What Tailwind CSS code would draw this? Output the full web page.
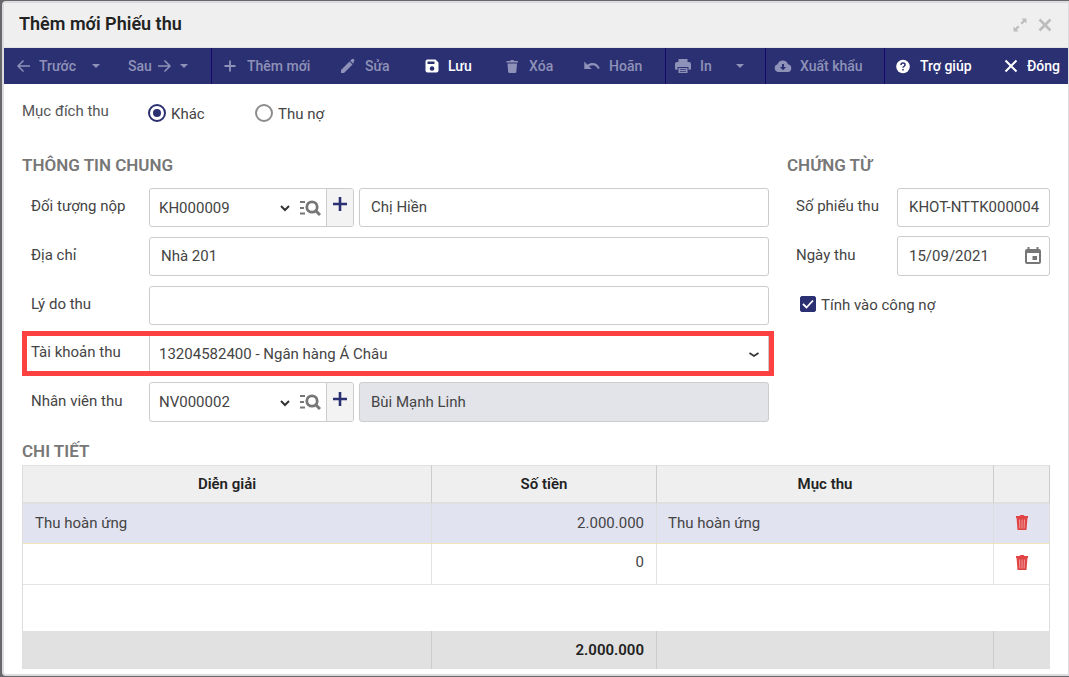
<!DOCTYPE html>
<html lang="vi">
<head>
    <meta charset="UTF-8">
    <meta name="viewport" content="width=device-width, initial-scale=1.0">
    <title>Thêm mới Phiếu thu</title>
    <script src="https://cdn.jsdelivr.net/npm/@tailwindcss/browser@4"></script>
</head>
<body class="min-h-screen flex flex-col bg-[#68686c] pt-px pl-0.5 pb-px font-[Roboto,sans-serif] text-[15px] leading-5 text-[#444]">
    <main class="flex-1 flex flex-col bg-white border-2 border-r border-[#dcdcde] rounded-l">
        <header class="h-[45px] flex items-center justify-between bg-[#efefef] border-b border-[#e3e3e3] pl-[15px] pr-4">
            <h1 class="text-lg font-semibold text-[#222] pb-0.5">Thêm mới Phiếu thu</h1>
            <div class="flex items-center gap-2.5 text-[#bdbdbd]">
                <button type="button" aria-label="Phóng to">
                    <svg class="w-4 h-4 block" viewBox="0 0 16 16" fill="currentColor"><path d="M9.500 1.500h5v5l-1.700-1.700-2.700 2.700-1.600-1.600 2.700-2.700zM1.500 14.500v-5l1.700 1.700 2.700-2.700 1.600 1.600-2.700 2.700L6.500 14.500z"/></svg>
                </button>
                <button type="button" aria-label="Đóng cửa sổ">
                    <svg class="w-3.5 h-3.5 block" viewBox="0 0 14 14" fill="none" stroke="currentColor" stroke-width="2.600"><path d="M1.500 1.500l11 11M12.500 1.500l-11 11"/></svg>
                </button>
            </div>
        </header>

        <!-- Toolbar -->
        <div class="h-9 flex bg-[#2b3072] text-sm font-medium text-[#8f92b8]">
            <div class="w-52 flex gap-7 pl-[13px] border-r border-[#15086b]">
                <button type="button" disabled class="w-[83px] flex items-center gap-2">
                    <svg class="w-3.5 h-3.5" viewBox="0 0 14 14" fill="none" stroke="currentColor" stroke-width="1.500"><path d="M13 7H1.500M6.500 1.500L1 7 6.500 12.500"/></svg>
                    <span>Trước</span>
                    <svg class="w-2 h-1 ml-auto" viewBox="0 0 8 4" fill="currentColor"><path d="M0 0h8L4 4z"/></svg>
                </button>
                <button type="button" disabled class="w-[60px] flex items-center gap-1.5">
                    <span>Sau</span>
                    <svg class="w-3.5 h-3.5" viewBox="0 0 14 14" fill="none" stroke="currentColor" stroke-width="1.500"><path d="M0 7h11.500M6.500 1.500L12 7 6.500 12.500"/></svg>
                    <svg class="w-2 h-1 ml-auto" viewBox="0 0 8 4" fill="currentColor"><path d="M0 0h8L4 4z"/></svg>
                </button>
            </div>
            <div class="w-[454px] flex pl-2.5 border-r border-[#15086b]">
                <button type="button" disabled class="w-[118px] flex items-center gap-[9px]">
                    <svg class="w-4 h-4" viewBox="0 0 16 16" fill="none" stroke="currentColor" stroke-width="1.800"><path d="M8 2.500v11M2.500 8h11"/></svg>
                    <span>Thêm mới</span>
                </button>
                <button type="button" disabled class="w-[84px] flex items-center gap-[9px]">
                    <svg class="w-4 h-4" viewBox="0 0 16 16" fill="currentColor"><path d="M1 15v-3l8.500-8.500 3 3L4 15zM10.200 2.800L12 1q1-.8 2 .2t0 2L13.200 5.800z"/></svg>
                    <span>Sửa</span>
                </button>
                <button type="button" class="w-20 flex items-center gap-2 text-white">
                    <svg class="w-4 h-4" viewBox="0 0 16 16" fill="currentColor" fill-rule="evenodd"><path d="M3.500 1.500h8l3 3v8q0 2-2 2h-9q-2 0-2-2v-9q0-2 2-2zM3.500 3.500v2.500h7V3.500zM8 8.200a2.300 2.300 0 1 0 .1 0z"/></svg>
                    <span>Lưu</span>
                </button>
                <button type="button" disabled class="w-20 flex items-center gap-[9px]">
                    <svg class="w-4 h-4" viewBox="0 0 16 16" fill="currentColor"><path d="M2.500 3h3.500l1-1h2.500l1 1H14v1.500H2.500zM3.500 5.500h9.500l-.6 8q-.1 1.500-1.500 1.500H5.600q-1.400 0-1.500-1.500z"/></svg>
                    <span>Xóa</span>
                </button>
                <button type="button" disabled class="flex items-center gap-[9px]">
                    <svg class="w-4 h-4" viewBox="0 0 16 16" fill="currentColor"><path d="M.3 3.500v7.500h7.500L5 8.500C8.600 6.200 12 7.200 13.900 11l1.900-.8C13.600 4.600 7.800 3.500 3.300 6.800z"/></svg>
                    <span>Hoãn</span>
                </button>
            </div>
            <div class="w-[100px] flex pl-2 border-r border-[#15086b]">
                <button type="button" disabled class="w-[70px] flex items-center gap-2">
                    <svg class="w-[18px] h-4" viewBox="0 0 18 16" fill="currentColor" fill-rule="evenodd"><path d="M4.500 1h9v3h-9zM3 4h12q2 0 2 2v4.500q0 1.300-1.300 1.300H14.500V9h-11v2.800H2.300Q1 11.800 1 10.500V6q0-2 2-2zM4.500 10h9v5h-9zM6 11.200v.8h6v-.8zM6 13v.8h6V13z"/></svg>
                    <span>In</span>
                    <svg class="w-2 h-1 ml-auto" viewBox="0 0 8 4" fill="currentColor"><path d="M0 0h8L4 4z"/></svg>
                </button>
            </div>
            <div class="w-[119px] flex pl-2 border-r border-[#15086b]">
                <button type="button" disabled class="flex items-center gap-2">
                    <svg class="w-[18px] h-4" viewBox="0 0 18 16" fill="currentColor" fill-rule="evenodd"><path d="M4.500 14A4 4 0 0 1 3.500 6.200 5.500 5.500 0 0 1 14 6.300 3.900 3.900 0 0 1 14 14zM8 6v3H5.800L9 12.200 12.200 9H10V6z"/></svg>
                    <span>Xuất khẩu</span>
                </button>
            </div>
            <div class="flex-1 flex justify-between pl-2.5 pr-2 text-white">
                <button type="button" class="flex items-center gap-[9px]">
                    <svg class="w-4 h-4" viewBox="0 0 16 16"><circle cx="8" cy="8.500" r="6.800" fill="currentColor"/><path d="M6 7q0-2 2-2t2 1.700q0 1-1 1.600-1 .5-1 1.500M8 11v1.500" fill="none" stroke="#2b3072" stroke-width="1.500"/></svg>
                    <span>Trợ giúp</span>
                </button>
                <button type="button" class="flex items-center gap-2">
                    <svg class="w-4 h-4" viewBox="0 0 16 16" fill="none" stroke="currentColor" stroke-width="2"><path d="M2.500 2.500l11 11M13.500 2.500l-11 11"/></svg>
                    <span>Đóng</span>
                </button>
            </div>
        </div>

        <form class="px-[18px] pb-[5px]">
            <!-- Purpose -->
            <div class="h-[58px] flex items-center" role="radiogroup" aria-labelledby="purpose">
                <span id="purpose" class="w-[126px] pb-1 text-[#555]">Mục đích thu</span>
                <label class="w-[107px] flex items-center gap-[5px]">
                    <input type="radio" name="purpose" checked class="appearance-none w-[18px] h-[18px] rounded-full border-2 border-[#2b3072] p-[3px] bg-clip-content checked:bg-[#2b3072]">
                    <span class="pt-0.5">Khác</span>
                </label>
                <label class="flex items-center gap-[5px]">
                    <input type="radio" name="purpose" class="appearance-none w-[18px] h-[18px] rounded-full border-2 border-[#8c8c8c] p-[3px] bg-clip-content checked:bg-[#2b3072]">
                    <span class="pt-0.5">Thu nợ</span>
                </label>
            </div>

            <div class="flex gap-[18px] pt-[11px]">
                <!-- General information -->
                <section class="flex-1 min-w-0">
                    <h2 class="text-[17px] leading-6 font-semibold text-[#777]">THÔNG TIN CHUNG</h2>
                    <div class="mt-[11px] flex flex-col gap-2.5">
                        <div class="h-[39px] flex items-center">
                            <label for="payer" class="w-[127px] shrink-0 pl-[9px] pb-[3px]">Đối tượng nộp</label>
                            <div class="w-[205px] h-full shrink-0 flex border border-[#ccc] rounded-[3px] overflow-hidden">
                                <div class="relative flex-1">
                                    <select id="payer" class="appearance-none w-full h-full pl-[9px] pr-6 outline-none">
                                        <option>KH000009</option>
                                    </select>
                                    <svg class="absolute right-1 top-[15px] w-2.5 h-2 pointer-events-none" viewBox="0 0 10 8" fill="none" stroke="#333" stroke-width="2"><path d="M1 2l4 4 4-4"/></svg>
                                </div>
                                <button type="button" aria-label="Tìm kiếm" class="w-8 flex items-center justify-center">
                                    <svg class="w-[22px] h-[18px]" viewBox="0 0 22 18" fill="none" stroke="#777" stroke-width="2"><path d="M1 3h5M1 9h4M1 14.500h5"/><circle cx="13" cy="8" r="5.200" stroke-width="2.800"/><path d="M16.500 11.500l4.500 4.500" stroke-width="3"/></svg>
                                </button>
                                <button type="button" aria-label="Thêm đối tượng" class="w-[27px] pb-[7px] flex items-center justify-center bg-[#f3f3f4] border-l border-[#ccc]">
                                    <svg class="w-3.5 h-3.5" viewBox="0 0 14 14" fill="none" stroke="#2b3072" stroke-width="2.600"><path d="M7 0v14M0 7h14"/></svg>
                                </button>
                            </div>
                            <input type="text" aria-label="Tên đối tượng" value="Chị Hiền" class="ml-[5px] flex-1 min-w-0 h-full px-[11px] pb-px border border-[#ccc] rounded-[3px] outline-none">
                        </div>
                        <div class="h-[39px] flex items-center">
                            <label for="address" class="w-[127px] shrink-0 pl-[9px] pb-[3px]">Địa chỉ</label>
                            <input id="address" type="text" value="Nhà 201" class="flex-1 min-w-0 h-full px-[11px] pb-px border border-[#ccc] rounded-[3px] outline-none">
                        </div>
                        <div class="h-[39px] flex items-center">
                            <label for="reason" class="w-[127px] shrink-0 pl-[9px] pb-[3px]">Lý do thu</label>
                            <input id="reason" type="text" class="flex-1 min-w-0 h-full px-[11px] pb-px border border-[#ccc] rounded-[3px] outline-none">
                        </div>
                        <div class="relative h-[37px] flex items-center">
                            <label for="account" class="w-[127px] shrink-0 pl-[9px] pb-[3px]">Tài khoản thu</label>
                            <select id="account" class="appearance-none flex-1 min-w-0 h-full pl-[9px] pr-8 border border-[#ccc] outline-none">
                                <option>13204582400 - Ngân hàng Á Châu</option>
                            </select>
                            <svg class="absolute right-2.5 top-4 w-2.5 h-2 pointer-events-none" viewBox="0 0 10 8" fill="none" stroke="#333" stroke-width="1.800"><path d="M.5 2L5 5l4.500-3"/></svg>
                            <div class="absolute -inset-y-1 left-0 -right-[5px] border-5 border-[#fd4141] pointer-events-none"></div>
                        </div>
                        <div class="h-10 flex items-center">
                            <label for="staff" class="w-[127px] shrink-0 pl-[9px] pb-[3px]">Nhân viên thu</label>
                            <div class="w-[205px] h-full shrink-0 flex border border-[#ccc] rounded-[3px] overflow-hidden">
                                <div class="relative flex-1">
                                    <select id="staff" class="appearance-none w-full h-full pl-[9px] pr-6 outline-none">
                                        <option>NV000002</option>
                                    </select>
                                    <svg class="absolute right-1 top-4 w-2.5 h-2 pointer-events-none" viewBox="0 0 10 8" fill="none" stroke="#333" stroke-width="2"><path d="M1 2l4 4 4-4"/></svg>
                                </div>
                                <button type="button" aria-label="Tìm kiếm" class="w-8 flex items-center justify-center">
                                    <svg class="w-[22px] h-[18px]" viewBox="0 0 22 18" fill="none" stroke="#777" stroke-width="2"><path d="M1 3h5M1 9h4M1 14.500h5"/><circle cx="13" cy="8" r="5.200" stroke-width="2.800"/><path d="M16.500 11.500l4.500 4.500" stroke-width="3"/></svg>
                                </button>
                                <button type="button" aria-label="Thêm nhân viên" class="w-[27px] pb-[7px] flex items-center justify-center bg-[#f3f3f4] border-l border-[#ccc]">
                                    <svg class="w-3.5 h-3.5" viewBox="0 0 14 14" fill="none" stroke="#2b3072" stroke-width="2.600"><path d="M7 0v14M0 7h14"/></svg>
                                </button>
                            </div>
                            <input type="text" aria-label="Tên nhân viên" value="Bùi Mạnh Linh" readonly class="ml-[5px] flex-1 min-w-0 h-full px-[11px] pb-px bg-[#e3e4ea] border border-[#ccc] rounded-[3px] outline-none">
                        </div>
                    </div>
                </section>

                <!-- Voucher -->
                <section class="w-[263px] shrink-0">
                    <h2 class="text-[17px] leading-6 font-semibold text-[#777]">CHỨNG TỪ</h2>
                    <div class="mt-[11px] flex flex-col gap-[9px]">
                        <div class="h-[39px] flex items-center">
                            <label for="number" class="w-[110px] shrink-0 pl-[9px] pb-[3px]">Số phiếu thu</label>
                            <input id="number" type="text" value="KHOT-NTTK000004" class="flex-1 min-w-0 h-full pl-[11px] pr-1 pb-px border border-[#ccc] rounded-[3px] outline-none">
                        </div>
                        <div class="h-10 flex items-center">
                            <label for="date" class="w-[110px] shrink-0 pl-[9px] pb-[3px]">Ngày thu</label>
                            <div class="flex-1 min-w-0 h-full flex items-center pr-2 border border-[#ccc] rounded-[3px]">
                                <input id="date" type="text" value="15/09/2021" class="flex-1 min-w-0 h-full pl-[11px] outline-none">
                                <button type="button" aria-label="Chọn ngày" class="pb-0.5">
                                    <svg class="w-4 h-[17px] block" viewBox="0 0 16 17" fill="#777" fill-rule="evenodd"><path d="M2.500 0h2v2h7V0h2v2h.5q2 0 2 2v11q0 2-2 2H2q-2 0-2-2V4q0-2 2-2h.5zM2 6v9h12V6zM7.500 9h4.500v4H7.500z"/></svg>
                                </button>
                            </div>
                        </div>
                        <label class="h-[39px] flex items-center pl-[13px] gap-[5px]">
                            <span class="relative pb-px">
                                <input type="checkbox" checked class="appearance-none block w-4 h-4 rounded-xs border border-[#888] checked:bg-[#2b3072] checked:border-[#2b3072]">
                                <svg class="absolute inset-0 w-4 h-4 pointer-events-none" viewBox="0 0 16 16" fill="none" stroke="#fff" stroke-width="1.800"><path d="M3 8l3.500 3.500L13 4.500"/></svg>
                            </span>
                            <span>Tính vào công nợ</span>
                        </label>
                    </div>
                </section>
            </div>

            <!-- Details -->
            <h2 class="mt-[17px] text-[17px] leading-6 font-semibold text-[#777]">CHI TIẾT</h2>
            <table class="mt-0.5 w-full table-fixed border-separate border-spacing-0 border-l border-[#ddd]">
                <colgroup>
                    <col class="w-[409px]">
                    <col class="w-[225px]">
                    <col>
                    <col class="w-14">
                </colgroup>
                <thead class="bg-[#efefef] text-[#222]">
                    <tr class="h-[39px]">
                        <th class="font-semibold border-t border-b-2 border-r border-y-[#e0e0e0] border-r-[#ccc]">Diễn giải</th>
                        <th class="font-semibold border-t border-b-2 border-r border-y-[#e0e0e0] border-r-[#ccc]">Số tiền</th>
                        <th class="font-semibold border-t border-b-2 border-r border-y-[#e0e0e0] border-r-[#ccc]">Mục thu</th>
                        <th class="border-t border-b-2 border-r border-y-[#e0e0e0] border-r-[#ccc]"></th>
                    </tr>
                </thead>
                <tbody>
                    <tr class="h-10 bg-[#e1e3f1]">
                        <td class="px-3 pb-0.5 border-r border-b border-r-[#ddd] border-b-[#f0e4b8]">Thu hoàn ứng</td>
                        <td class="px-3 pb-0.5 text-right border-r border-b border-r-[#ddd] border-b-[#f0e4b8]">2.000.000</td>
                        <td class="px-[11px] pb-0.5 border-r border-b border-r-[#ddd] border-b-[#f0e4b8]">Thu hoàn ứng</td>
                        <td class="pb-0.5 border-r border-b border-r-[#ddd] border-b-[#f0e4b8]">
                            <button type="button" aria-label="Xóa dòng" class="block mx-auto">
                                <svg class="w-3 h-[15px] block" viewBox="0 0 12 15"><path d="M0 1h3.500L4.500 0h3l1 1H12v2H0zM.5 2.500h11L10.500 15h-9z" fill="#e04444"/><path d="M3.500 4.500l.4 9M6 4.500v9M8.500 4.500l-.4 9" stroke="#f2b0b0" stroke-width=".8"/></svg>
                            </button>
                        </td>
                    </tr>
                    <tr class="h-[41px]">
                        <td class="border-r border-b border-[#e3e3e3]"></td>
                        <td class="px-3 pb-1 text-right border-r border-b border-[#e3e3e3]">0</td>
                        <td class="border-r border-b border-[#e3e3e3]"></td>
                        <td class="pb-1 border-r border-b border-r-[#ddd] border-b-[#e3e3e3]">
                            <button type="button" aria-label="Xóa dòng" class="block mx-auto">
                                <svg class="w-3 h-[15px] block" viewBox="0 0 12 15"><path d="M0 1h3.500L4.500 0h3l1 1H12v2H0zM.5 2.500h11L10.500 15h-9z" fill="#e04444"/><path d="M3.500 4.500l.4 9M6 4.500v9M8.500 4.500l-.4 9" stroke="#f2b0b0" stroke-width=".8"/></svg>
                            </button>
                        </td>
                    </tr>
                    <tr class="h-[46px]">
                        <td colspan="4" class="border-r border-[#ddd]"></td>
                    </tr>
                </tbody>
                <tfoot class="bg-[#e1e1e1] text-[#222]">
                    <tr class="h-[38px]">
                        <td class="border-r border-[#ccc]"></td>
                        <td class="px-3 text-right font-semibold border-r border-[#ccc]">2.000.000</td>
                        <td class="border-r border-[#ccc]"></td>
                        <td></td>
                    </tr>
                </tfoot>
            </table>
        </form>
    </main>
</body>
</html>
